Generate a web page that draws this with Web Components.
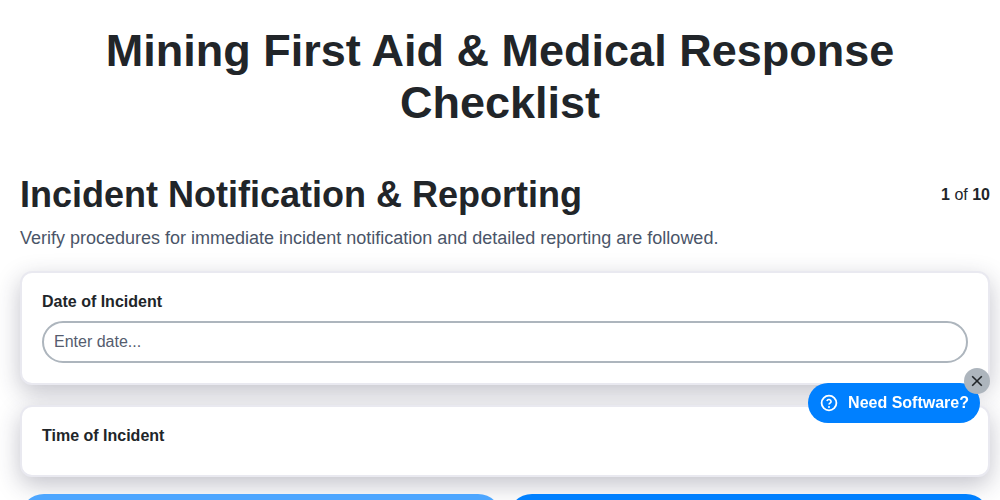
<!DOCTYPE html>
<html>
<head>
<meta charset="utf-8">
<title>Mining First Aid & Medical Response Checklist</title>
<style>
  html { overflow: hidden; }
  body {
    margin: 0;
    color: #212529;
    font-family: "Liberation Sans", Arial, sans-serif;
    background: #fff;
  }
</style>
</head>
<body>
<checklist-page heading="Mining First Aid &amp; Medical Response Checklist">
  <checklist-section heading="Incident Notification &amp; Reporting" step="1" total="10"
    description="Verify procedures for immediate incident notification and detailed reporting are followed.">
    <checklist-field label="Date of Incident" placeholder="Enter date..."></checklist-field>
    <checklist-field label="Time of Incident"></checklist-field>
  </checklist-section>
  <checklist-nav></checklist-nav>
</checklist-page>
<software-badge></software-badge>

<script>
customElements.define(
  "checklist-page",
  class extends HTMLElement {
    constructor() {
      super();
      this._shadow = this.attachShadow({ mode: "open" });
      this._shadow.innerHTML = `
        <style>
        :host {
          display: block;
        }
        h1 {
          margin: 0;
          padding: 25px 90px 0;
          font-size: 45px;
          line-height: 52px;
          font-weight: 700;
          text-align: center;
          color: #212529;
        }
        .content {
          padding: 44px 10px 0 20px;
        }
        </style>
        <h1></h1>
        <div class="content"><slot></slot></div>
      `;
      this._shadow.querySelector("h1").textContent = this.getAttribute("heading");
    }
  }
);

customElements.define(
  "checklist-section",
  class extends HTMLElement {
    constructor() {
      super();
      this._shadow = this.attachShadow({ mode: "open" });
      this._shadow.innerHTML = `
        <style>
        :host {
          display: block;
        }
        .head {
          display: flex;
          justify-content: space-between;
          align-items: flex-start;
        }
        h2 {
          margin: 0;
          font-size: 36px;
          line-height: 43px;
          font-weight: 700;
          color: #212529;
        }
        .step {
          font-size: 16px;
          line-height: 24px;
          padding-top: 10px;
          color: #212529;
        }
        p {
          margin: 0;
          padding-top: 9px;
          font-size: 18px;
          line-height: 27px;
          color: #4a5568;
        }
        .fields {
          display: flex;
          flex-direction: column;
          gap: 20px;
          padding-top: 19px;
        }
        </style>
        <div class="head">
          <h2></h2>
          <div class="step"><b id="step"></b> of <b id="total"></b></div>
        </div>
        <p></p>
        <div class="fields"><slot></slot></div>
      `;
      this._shadow.querySelector("h2").textContent = this.getAttribute("heading");
      this._shadow.querySelector("p").textContent = this.getAttribute("description");
      this._shadow.getElementById("step").textContent = this.getAttribute("step");
      this._shadow.getElementById("total").textContent = this.getAttribute("total");
    }
  }
);

customElements.define(
  "checklist-field",
  class extends HTMLElement {
    constructor() {
      super();
      this._shadow = this.attachShadow({ mode: "open" });
      this._shadow.innerHTML = `
        <style>
        :host {
          display: block;
          background: #fff;
          border: 2px solid #e9e9f0;
          border-radius: 12px;
          padding: 19px 20px 20px;
          box-shadow: 0 8px 24px rgba(40, 40, 70, 0.28);
        }
        label {
          display: block;
          font-size: 16px;
          line-height: 20px;
          font-weight: 700;
          color: #212529;
          margin-bottom: 9px;
        }
        input {
          display: block;
          box-sizing: border-box;
          width: 100%;
          height: 42px;
          padding: 0 10px;
          border: 2px solid #adb5bd;
          border-radius: 21px;
          background: #fff;
          font: 16px "Liberation Sans", Arial, sans-serif;
          color: #212529;
          outline: none;
        }
        input::placeholder {
          color: #555c6e;
          opacity: 1;
        }
        </style>
        <label></label>
      `;
      this._shadow.querySelector("label").textContent = this.getAttribute("label");
      if (this.hasAttribute("placeholder")) {
        const input = document.createElement("input");
        input.type = "text";
        input.placeholder = this.getAttribute("placeholder");
        this._shadow.appendChild(input);
      }
    }
  }
);

customElements.define(
  "checklist-nav",
  class extends HTMLElement {
    constructor() {
      super();
      this._shadow = this.attachShadow({ mode: "open" });
      this._shadow.innerHTML = `
        <style>
        :host {
          display: flex;
          gap: 6px;
          padding-top: 17px;
        }
        button {
          flex: 1;
          height: 48px;
          border: none;
          border-radius: 24px;
          background: #0080ff;
          color: #fff;
          font: 700 16px "Liberation Sans", Arial, sans-serif;
        }
        button.prev {
          background: #4da6ff;
        }
        </style>
        <button class="prev"></button>
        <button></button>
      `;
    }
  }
);

customElements.define(
  "software-badge",
  class extends HTMLElement {
    constructor() {
      super();
      this._shadow = this.attachShadow({ mode: "open" });
      this._shadow.innerHTML = `
        <style>
        :host {
          position: fixed;
          right: 20px;
          top: 383px;
          display: flex;
          align-items: center;
          gap: 10px;
          height: 40px;
          padding: 0 11px 0 12px;
          border-radius: 20px;
          background: #0080ff;
          color: #fff;
          font-size: 16px;
          font-weight: 700;
          white-space: nowrap;
        }
        svg.help {
          display: block;
          width: 18px;
          height: 18px;
        }
        .close {
          position: absolute;
          top: -15px;
          right: -10px;
          width: 26px;
          height: 26px;
          border-radius: 50%;
          background: #adb5bd;
          display: flex;
          align-items: center;
          justify-content: center;
        }
        .close svg {
          display: block;
          width: 12px;
          height: 12px;
        }
        </style>
        <svg class="help" viewBox="0 0 18 18" fill="none" stroke="#fff" stroke-width="1.8">
          <circle cx="9" cy="9" r="7.4"/>
          <path d="M6.9 7a2.15 2.15 0 0 1 4.2.6c0 1.4-2.1 1.8-2.1 3" stroke-width="1.6"/>
          <circle cx="9" cy="12.9" r="1" fill="#fff" stroke="none"/>
        </svg>
        <span>Need Software?</span>
        <div class="close">
          <svg viewBox="0 0 12 12" fill="none" stroke="#212529" stroke-width="1.6">
            <path d="M1.2 1.2l9.6 9.6M10.8 1.2l-9.6 9.6"/>
          </svg>
        </div>
      `;
    }
  }
);
</script>
</body>
</html>
